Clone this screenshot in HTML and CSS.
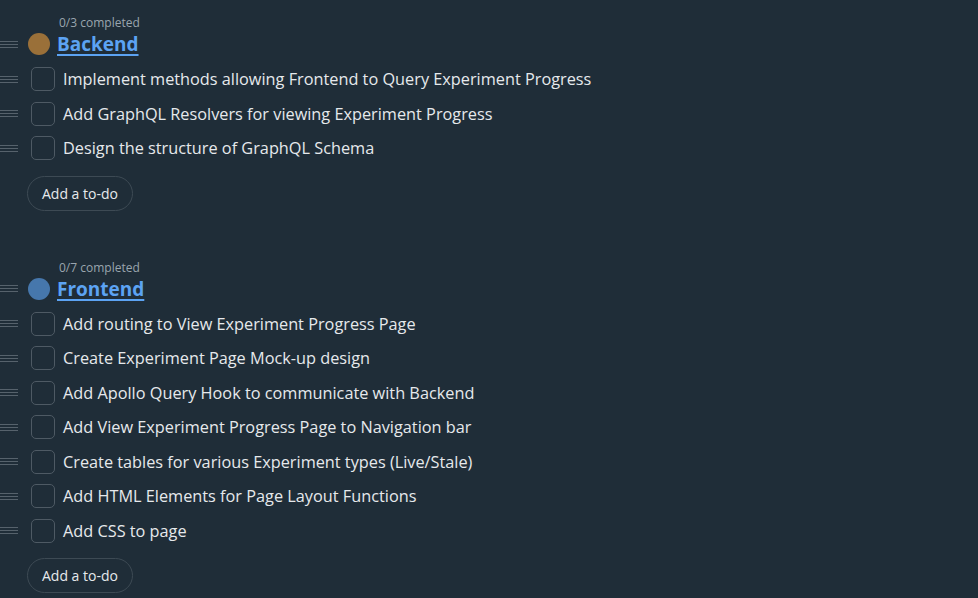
FILE: index.html
```html
<!DOCTYPE html>
<html>
<head>
<meta charset="utf-8">
<link rel="stylesheet" href="styles.css">
</head>
<body>
<div class="board">
  <section class="group">
    <div class="progress">0/3 completed</div>
    <div class="head">
      <span class="handle"><i></i><i></i><i></i></span>
      <span class="dot dot-brown"></span>
      <a class="title" href="#">Backend</a>
    </div>
    <ul class="items">
      <li class="item"><span class="handle"><i></i><i></i><i></i></span><span class="box"></span><span class="label">Implement methods allowing Frontend to Query Experiment Progress</span></li>
      <li class="item"><span class="handle"><i></i><i></i><i></i></span><span class="box"></span><span class="label">Add GraphQL Resolvers for viewing Experiment Progress</span></li>
      <li class="item"><span class="handle"><i></i><i></i><i></i></span><span class="box"></span><span class="label">Design the structure of GraphQL Schema</span></li>
    </ul>
    <button class="add">Add a to-do</button>
  </section>
  <section class="group group2">
    <div class="progress">0/7 completed</div>
    <div class="head">
      <span class="handle"><i></i><i></i><i></i></span>
      <span class="dot dot-blue"></span>
      <a class="title" href="#">Frontend</a>
    </div>
    <ul class="items">
      <li class="item"><span class="handle"><i></i><i></i><i></i></span><span class="box"></span><span class="label">Add routing to View Experiment Progress Page</span></li>
      <li class="item"><span class="handle"><i></i><i></i><i></i></span><span class="box"></span><span class="label">Create Experiment Page Mock-up design</span></li>
      <li class="item"><span class="handle"><i></i><i></i><i></i></span><span class="box"></span><span class="label">Add Apollo Query Hook to communicate with Backend</span></li>
      <li class="item"><span class="handle"><i></i><i></i><i></i></span><span class="box"></span><span class="label">Add View Experiment Progress Page to Navigation bar</span></li>
      <li class="item"><span class="handle"><i></i><i></i><i></i></span><span class="box"></span><span class="label">Create tables for various Experiment types (Live/Stale)</span></li>
      <li class="item"><span class="handle"><i></i><i></i><i></i></span><span class="box"></span><span class="label">Add HTML Elements for Page Layout Functions</span></li>
      <li class="item"><span class="handle"><i></i><i></i><i></i></span><span class="box"></span><span class="label">Add CSS to page</span></li>
    </ul>
    <button class="add">Add a to-do</button>
  </section>
</div>
</body>
</html>
```
FILE: styles.css
```css
html, body {
  margin: 0;
  padding: 0;
  background: #1f2d38;
  height: 100%;
  overflow: hidden;
}
body {
  font-family: "Open Sans", "Noto Sans", sans-serif;
  color: #e6e9ec;
}
.board {
  padding-top: 16px;
}
.group2 {
  margin-top: 50px;
}
.progress {
  font-size: 12px;
  line-height: 14px;
  color: #9aa5ae;
  padding-left: 59px;
}
.head {
  display: flex;
  align-items: center;
  height: 24px;
  margin-top: 2px;
}
.handle {
  display: flex;
  flex-direction: column;
  gap: 2px;
  width: 18px;
  flex: none;
}
.handle i {
  display: block;
  height: 1px;
  background: #56626c;
}
.dot {
  width: 22px;
  height: 22px;
  border-radius: 50%;
  margin-left: 10px;
  flex: none;
}
.dot-brown { background: #9a7039; }
.dot-blue { background: #4677ac; }
.title {
  margin-left: 7px;
  font-size: 19px;
  font-weight: 700;
  color: #5ca3f3;
  text-decoration: underline;
  text-underline-offset: 3px;
  text-decoration-thickness: 2px;
  line-height: 24px;
}
.items {
  list-style: none;
  margin: 6px 0 0 0;
  padding: 0;
}
.item {
  display: flex;
  align-items: center;
  height: 34.5px;
}
.box {
  width: 22px;
  height: 22px;
  border: 1px solid #4e5a64;
  border-radius: 5px;
  margin-left: 13px;
  flex: none;
}
.label {
  margin-left: 8px;
  font-size: 16.3px;
  white-space: nowrap;
}
.add {
  margin: 10px 0 0 27px;
  height: 35px;
  padding: 0 14px;
  border: 1px solid #3d4a54;
  border-radius: 18px;
  background: transparent;
  color: #e6e9ec;
  font-family: "Open Sans", "Noto Sans", sans-serif;
  font-size: 14px;
  cursor: pointer;
}
```
